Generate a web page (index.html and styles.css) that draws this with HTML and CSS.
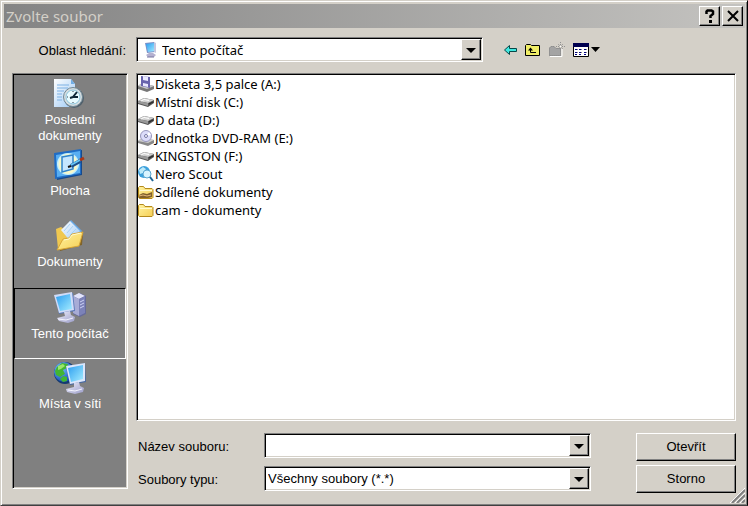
FILE: index.html
```html
<!DOCTYPE html>
<html lang="cs">
<head>
    <meta charset="UTF-8">
    <meta name="viewport" content="width=device-width, initial-scale=1.0">
    <title>Zvolte soubor</title>
    <link rel="stylesheet" href="styles.css">
</head>
<body>
    <svg class="defs" aria-hidden="true">
        <defs>
            <linearGradient id="screen" x1="0" y1="0" x2="1" y2="1">
                <stop offset="0" stop-color="#2b9df0"/>
                <stop offset="1" stop-color="#a5edff"/>
            </linearGradient>
            <linearGradient id="paper" x1="0" y1="0" x2="1" y2="1">
                <stop offset="0" stop-color="#ffffff"/>
                <stop offset="1" stop-color="#9cc8f4"/>
            </linearGradient>
            <linearGradient id="gold" x1="0" y1="0" x2="1" y2="1">
                <stop offset="0" stop-color="#fff3a0"/>
                <stop offset="1" stop-color="#f6cf55"/>
            </linearGradient>
            <linearGradient id="plastic" x1="0" y1="0" x2="1" y2="1">
                <stop offset="0" stop-color="#f0f0fc"/>
                <stop offset="1" stop-color="#9a9cc8"/>
            </linearGradient>
            <radialGradient id="globe" cx="0.35" cy="0.3" r="0.8">
                <stop offset="0" stop-color="#7cc4ff"/>
                <stop offset="1" stop-color="#0a3fb0"/>
            </radialGradient>
            <symbol id="drive" viewBox="0 0 16 16">
                <path d="M0 7l6-3 10 2v3l-6 4-10-3z" fill="#555"/>
                <path d="M0 7l6-3 10 2-6 3z" fill="#d0d0d0"/>
                <path d="M0 7l10 2v3l-10-3z" fill="#999"/>
                <path d="M3 7l3-1.500 5 1" stroke="#fff" fill="none"/>
                <path d="M11 10l4-2" stroke="#222"/>
            </symbol>
            <symbol id="folder" viewBox="0 0 16 16">
                <path d="M.5 13.500v-10l1-1h4l1.500 2h7l1 1v8l-1 1h-12.500z" fill="url(#gold)" stroke="#b58a1c"/>
                <path d="M2 6.500h12" stroke="#fffbd0"/>
            </symbol>
        </defs>
    </svg>

    <form class="dialog" onsubmit="return false">
        <header class="title-bar">
            <h1>Zvolte soubor</h1>
            <button type="button" class="title-btn" aria-label="Nápověda">
                <svg width="12" height="14" viewBox="0 0 12 14"><path d="M2.500 5V2.500l1-1h4l1.500 1v2.500L6.500 7v2" fill="none" stroke="#000" stroke-width="2.500"/><path d="M5 11h3v3H5z"/></svg>
            </button>
            <button type="button" class="title-btn" aria-label="Zavřít">
                <svg width="12" height="12" viewBox="0 0 12 12"><path d="M1 1l10 10M11 1L1 11" stroke="#000" stroke-width="2"/></svg>
            </button>
        </header>

        <div class="look-in">
            <label for="location">Oblast hledání:</label>
            <div class="combo location">
                <svg class="combo-icon" width="16" height="16" viewBox="0 0 16 16">
                    <path d="M2 1l9-1 1 10-8 1z" fill="#7c90c8"/>
                    <path d="M3 2l8-1 1 8-7 1z" fill="url(#screen)"/>
                    <path d="M11 0l2 1v10l-2-1z" fill="#c4c6df"/>
                    <path d="M6 11h4l3 2-2 2H5l-2-2z" fill="#b4b0d0"/>
                    <path d="M4 15h7" stroke="#7774a0"/>
                </svg>
                <select id="location">
                    <option>Tento počítač</option>
                </select>
                <span class="arrow"></span>
            </div>
            <div class="toolbar">
                <button type="button" class="tool" aria-label="Zpět">
                    <svg width="13" height="12" viewBox="0 0 13 12"><path d="M.5 6l5-4.500v3h7v3h-7v3z" fill="#40e8e0" stroke="#064848"/></svg>
                </button>
                <button type="button" class="tool" aria-label="O úroveň výš">
                    <svg width="16" height="14" viewBox="0 0 16 14"><path d="M.5 12.500V2.500l1-1h4l1 1h8v10z" fill="#f0ee68" stroke="#000"/><path d="M5.500 6v3.500H11" fill="none" stroke="#000"/><path d="M3 7.500L5.500 4.500 8 7.500z"/></svg>
                </button>
                <button type="button" class="tool" aria-label="Nová složka" disabled>
                    <svg width="16" height="16" viewBox="0 0 16 16">
                        <path d="M1 14.500h12V7" fill="none" stroke="#fff"/>
                        <path d="M0 14V6l2-2h3l2 2h5v8z" fill="#a4a4a4"/>
                        <path d="M.5 13.500V6l1.500-1.500h3l2 2h4.500v7z" fill="none" stroke="#808080" stroke-dasharray="1 1"/>
                        <path d="M11.500 0v9M7 4.500h9M9 2l5 5M14 2L9 7" stroke="#909090" stroke-dasharray="1 1"/>
                        <path d="M11 4h1v1h-1z" fill="#fff"/>
                    </svg>
                </button>
                <button type="button" class="tool" aria-label="Zobrazit">
                    <svg width="27" height="14" viewBox="0 0 27 14">
                        <path d="M.5.5h15v13H.5z" fill="#fff" stroke="#000"/>
                        <path d="M0 0h16v4H0z" fill="#000050"/>
                        <path d="M2 6h2v1H2zM6 6h2v1H6zM11 6h2v1h-2zM2 9h2v1H2zM6 9h2v1H6zM11 9h2v1h-2zM2 11h2v1H2zM6 11h2v1H6zM11 11h2v1h-2z" fill="#000080"/>
                        <path d="M4 6h1v1H4zM8 6h1v1H8zM13 6h1v1h-1zM4 9h1v1H4zM8 9h1v1H8zM13 9h1v1h-1z" fill="#888"/>
                        <path d="M18 4h9l-4.500 5z"/>
                    </svg>
                </button>
            </div>
        </div>

        <div class="main">
            <nav class="places">
                <button type="button" class="place">
                    <svg width="32" height="32" viewBox="0 0 32 32">
                        <path d="M0 1h17l4 5v23H0z" fill="url(#paper)"/>
                        <path d="M17 1v5h4z" fill="#72aee4"/>
                        <path d="M3 7h12M3 10h11M3 13h7M3 16h5M3 19h5M3 22h5" stroke="#7db1e4"/>
                        <circle cx="20" cy="20" r="10" fill="#50606c"/>
                        <circle cx="19" cy="19" r="9.500" fill="#d6dde0" stroke="#718894"/>
                        <circle cx="19" cy="19" r="7" fill="#e8fbff" stroke="#8cc5dc"/>
                        <path d="M23 14l-4 5h5M19 19l-3 1" fill="none" stroke="#102838" stroke-width="2"/>
                        <path d="M19 13v1M13 19h1M19 24v1" stroke="#345"/>
                    </svg>
                    Poslední dokumenty
                </button>
                <button type="button" class="place">
                    <svg width="32" height="32" viewBox="0 0 32 32">
                        <path d="M2 5l26-4v25L3 31z" fill="#174a8c"/>
                        <path d="M0 4l27-4v25L1 30z" fill="#1f6cc4"/>
                        <path d="M2 6l24-4v22L3 28z" fill="#58aef2"/>
                        <ellipse cx="14" cy="15" rx="11" ry="11" fill="#c8f0fa"/>
                        <ellipse cx="14" cy="15" rx="9.500" ry="10" fill="#f8f8c8"/>
                        <path d="M8 8l11-2v14l-11 3z" fill="#c4e6ff" stroke="#2f84cc" stroke-width="1.500"/>
                        <path d="M17 17l9-5" stroke="#1c4f8b" stroke-width="4"/>
                        <path d="M17 16l9-5" stroke="#64c5f5" stroke-width="2"/>
                        <path d="M26 11l4-2" stroke="#a93818" stroke-width="3"/>
                        <path d="M14 18l3-1" stroke="#111" stroke-width="2"/>
                    </svg>
                    Plocha
                </button>
                <button type="button" class="place">
                    <svg width="32" height="32" viewBox="0 0 32 32">
                        <path d="M3 10l5-2 3 3 18 2-1 12-22 6z" fill="#806328"/>
                        <path d="M2 9l5-2 4 3 11 1v15L4 29z" fill="#f0c850"/>
                        <path d="M8 10L17 0l11 11-10 12z" fill="#68a8e4"/>
                        <path d="M7 10L16 1l10 10-9 11z" fill="url(#paper)"/>
                        <path d="M10 11l6-7M13 13l6-7M16 15l6-6" stroke="#a5d2f7"/>
                        <path d="M3 30l6-11 6-1 3-4 11-2-4 14z" fill="url(#gold)" stroke="#d8a638"/>
                        <path d="M10 20l5-1 3-4 9-2" fill="none" stroke="#fffbd0"/>
                    </svg>
                    Dokumenty
                </button>
                <button type="button" class="place selected">
                    <svg width="32" height="32" viewBox="0 0 32 32">
                        <path d="M20 4l6-3 6 3v18l-6 3-7-3z" fill="#666b9a"/>
                        <path d="M19 4l6-3 6 3-6 3z" fill="#e2e4fb"/>
                        <path d="M19 4l6 3v17l-6-3z" fill="#a8acd6"/>
                        <path d="M25 7l6-3v17l-6 3z" fill="#7c82b8"/>
                        <path d="M26 10l4-2M26 13l4-2M26 16l4-2" stroke="#ced2f5"/>
                        <path d="M1 4l18-3 2 18-16 3z" fill="#5a79b9"/>
                        <path d="M0 3l18-3 2 18-15 3z" fill="#d0dcf8"/>
                        <path d="M2 5l14-3 2 15-12 2z" fill="url(#screen)"/>
                        <path d="M10 20l6-1 1 4 4 2-1 4-6 2-9-2-2-3 8-2z" fill="url(#plastic)"/>
                        <path d="M4 27l8 1 7-2" fill="none" stroke="#f4f4ff"/>
                    </svg>
                    Tento počítač
                </button>
                <button type="button" class="place">
                    <svg width="32" height="32" viewBox="0 0 32 32">
                        <circle cx="11" cy="11" r="11" fill="#143a70"/>
                        <circle cx="10" cy="10" r="10" fill="url(#globe)"/>
                        <path d="M3 5l5-4 6 1-1 4-4 2 2 4-5 3-4-2-1-4zM9 14l4 1v4l-4 1-3-3z" fill="#42b532"/>
                        <path d="M4 4l5-2 2 2-4 3-3 1z" fill="#9be66c"/>
                        <path d="M12 5l19-4 1 19-16 3z" fill="#4768a2"/>
                        <path d="M12 4l19-3v18l-15 3z" fill="#dbe6fa"/>
                        <path d="M14 6l15-3v14l-12 3z" fill="url(#screen)"/>
                        <path d="M20 21l5-1 1 4 4 2-1 4-8 2-8-2-1-3 8-2z" fill="url(#plastic)"/>
                        <path d="M14 28l7 1 7-2" fill="none" stroke="#f4f4ff"/>
                    </svg>
                    Místa v síti
                </button>
            </nav>

            <div class="content">
                <ul class="file-list">
                    <li>
                        <svg width="16" height="16" viewBox="0 0 16 16"><path d="M0 10l4-3 12 3v3l-7 3-9-3z" fill="#777"/><path d="M0 10l4-3 12 3-7 3z" fill="#c8c8c8"/><path d="M3 0l9 1v11l-9-2z" fill="#6864ad"/><path d="M5 0l5 1v4l-5-1zM5 7l5 1v3l-5-1z" fill="#e9e9ff"/></svg>
                        Disketa 3,5 palce (A:)
                    </li>
                    <li><svg width="16" height="16"><use href="#drive"/></svg>Místní disk (C:)</li>
                    <li><svg width="16" height="16"><use href="#drive"/></svg>D data (D:)</li>
                    <li>
                        <svg width="16" height="16" viewBox="0 0 16 16"><path d="M0 11l4-3 12 2v3l-6 3-10-3z" fill="#888"/><path d="M0 11l4-3 12 2-6 3z" fill="#ccc"/><circle cx="8" cy="6" r="5.500" fill="#dcdcfa" stroke="#9796bc"/><path d="M8 6l3-4 2 3z" fill="#fff"/><circle cx="8" cy="6" r="1.500" fill="#fff" stroke="#7777a5"/></svg>
                        Jednotka DVD-RAM (E:)
                    </li>
                    <li><svg width="16" height="16"><use href="#drive"/></svg>KINGSTON (F:)</li>
                    <li>
                        <svg width="16" height="16" viewBox="0 0 16 16"><circle cx="6" cy="6" r="6" fill="#3ba0dc"/><path d="M1 4l4-3 3 2-3 4-3 1z" fill="#bdeafa"/><circle cx="9" cy="8" r="4" fill="#d9f4ff" stroke="#5aa6d0"/><path d="M12 11l3 4" stroke="#1e6596" stroke-width="2"/></svg>
                        Nero Scout
                    </li>
                    <li>
                        <svg width="16" height="16" viewBox="0 0 16 16"><use href="#folder"/><path d="M1 11l4-2 4 1 5-2v5l-4 1H1z" fill="#80602c"/><path d="M1 12l4-1 4 1 4-1" fill="none" stroke="#e8bc78"/></svg>
                        Sdílené dokumenty
                    </li>
                    <li><svg width="16" height="16"><use href="#folder"/></svg>cam - dokumenty</li>
                </ul>

                <div class="bottom">
                    <div class="fields">
                        <div class="field">
                            <label for="file-name">Název souboru:</label>
                            <div class="combo">
                                <input type="text" id="file-name">
                                <span class="arrow"></span>
                            </div>
                        </div>
                        <div class="field">
                            <label for="file-type">Soubory typu:</label>
                            <div class="combo">
                                <select id="file-type">
                                    <option>Všechny soubory (*.*)</option>
                                </select>
                                <span class="arrow"></span>
                            </div>
                        </div>
                    </div>
                    <div class="actions">
                        <button type="submit" class="btn">Otevřít</button>
                        <button type="button" class="btn">Storno</button>
                    </div>
                </div>
            </div>
        </div>

        <svg class="grip" width="15" height="15" viewBox="0 0 15 15">
            <path d="M0 15L15 0M5 15L15 5M10 15l5-5" stroke="#fff"/>
            <path d="M2 15L15 2M7 15l8-8M12 15l3-3" stroke="#808080" stroke-width="2"/>
        </svg>
    </form>
</body>
</html>
```
FILE: styles.css
```css
* {
    box-sizing: border-box;
}
body {
    margin: 0;
    background-color: #d4d0c8;
    font-family: "Liberation Sans", Arial, sans-serif;
    font-size: 13px;
    line-height: 16px;
    color: #000;
}
button, input, select {
    font: inherit;
    color: inherit;
}
.defs {
    position: absolute;
    width: 0;
    height: 0;
}
.dialog {
    position: relative;
    display: flex;
    flex-direction: column;
    min-height: 100vh;
    padding: 3px 2px 12px 3px;
    border: 1px solid;
    border-color: #d4d0c8 #000 #404040 #d4d0c8;
    box-shadow: inset 1px 1px #fff, inset -1px -1px #808080;
}
.title-bar {
    display: flex;
    align-items: center;
    gap: 2px;
    height: 24px;
    padding: 0 2px;
    background: linear-gradient(to right, #848484, #c4c3c0);
}
.title-bar h1 {
    flex: 1;
    margin: 0;
    font-family: "Noto Sans", Tahoma, sans-serif;
    font-size: 15px;
    font-weight: normal;
    color: #d4d0c8;
}
.title-btn {
    display: flex;
    align-items: center;
    justify-content: center;
    width: 21px;
    height: 20px;
    padding: 0;
}
.title-btn, .btn, .arrow {
    background-color: #d4d0c8;
    border: 1px solid;
    border-color: #fff #000 #000 #fff;
    box-shadow: inset -1px -1px #808080;
}
.look-in {
    display: flex;
    align-items: center;
    margin-top: 9px;
    padding-left: 8px;
}
.look-in label {
    width: 124px;
    padding: 3px 10px 0 0;
    text-align: right;
    white-space: nowrap;
}
.combo {
    position: relative;
    display: flex;
    align-items: center;
    flex: 1;
    height: 25px;
    padding: 2px;
}
.combo, .places, .file-list {
    border: 1px solid;
    border-color: #808080 #fff #fff #808080;
    box-shadow: inset 1px 1px #000, inset -1px -1px #d4d0c8;
}
.combo, .file-list {
    background-color: #fff;
}
.combo input, .combo select {
    flex: 1;
    min-width: 0;
    height: 18px;
    padding: 0 22px 0 1px;
    border: none;
    outline: none;
    background: transparent;
    appearance: none;
}
.combo-icon {
    margin-left: 4px;
}
.location {
    flex: 0 1 347px;
}
.location select {
    padding-left: 3px;
    font-family: "Noto Sans", Tahoma, sans-serif;
}
.arrow {
    position: absolute;
    top: 1px;
    right: 1px;
    bottom: 1px;
    width: 20px;
    pointer-events: none;
}
.arrow::after {
    content: "";
    position: absolute;
    top: 8px;
    left: 4px;
    border: 5px solid transparent;
    border-top-color: #000;
    border-bottom: none;
}
.toolbar {
    display: flex;
    align-items: center;
    gap: 8px;
    height: 16px;
    margin-left: 21px;
}
.tool {
    display: flex;
    padding: 0;
    border: none;
    background: none;
}
.main {
    display: flex;
    flex: 1;
    gap: 8px;
    margin-top: 11px;
    padding: 0 9px 0 8px;
}
.places {
    display: flex;
    flex-direction: column;
    width: 116px;
    margin-bottom: 4px;
    padding: 1px;
    background-color: #808080;
}
.place {
    display: flex;
    flex-direction: column;
    align-items: center;
    gap: 2px;
    height: 71px;
    padding: 2px 16px;
    border: 1px solid transparent;
    background: none;
    color: #fff;
}
.place svg {
    flex: none;
}
.place.selected {
    padding: 3px 8px;
    border-color: #000 #fff #fff #000;
}
.content {
    display: flex;
    flex-direction: column;
    flex: 1;
    gap: 12px;
}
.file-list {
    flex: 1;
    margin: 0;
    padding: 1px;
    list-style: none;
    font-family: "Noto Sans", Tahoma, sans-serif;
}
.file-list li {
    display: flex;
    align-items: center;
    gap: 1px;
    height: 18px;
}
.bottom {
    display: flex;
    gap: 45px;
}
.fields {
    display: flex;
    flex-direction: column;
    flex: 1;
    gap: 8px;
}
.field {
    display: flex;
    align-items: center;
}
.field label {
    width: 128px;
    padding: 3px 0 0 2px;
}
.actions {
    display: flex;
    flex-direction: column;
    gap: 4px;
    width: 100px;
}
.btn {
    height: 28px;
    padding: 0;
}
.grip {
    position: absolute;
    right: 2px;
    bottom: 2px;
}
```
